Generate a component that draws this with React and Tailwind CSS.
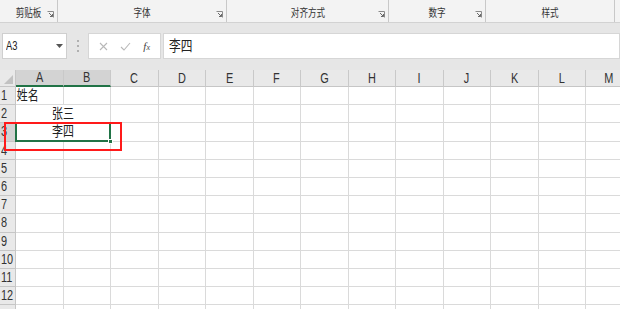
const groups = [
  { label: "剪贴板", w: 58, launcher: true },
  { label: "字体", w: 169, launcher: true },
  { label: "对齐方式", w: 162, launcher: true },
  { label: "数字", w: 97, launcher: true },
  { label: "样式", w: 129, launcher: false },
];

const cols = ["A", "B", "C", "D", "E", "F", "G", "H", "I", "J", "K", "L", "M"];
const rows = [1, 2, 3, 4, 5, 6, 7, 8, 9, 10, 11, 12, 13];

function Narrow({ children, className = "" }) {
  return <span className={"inline-block scale-x-[0.78] " + className}>{children}</span>;
}

function Launcher() {
  return (
    <svg width="7" height="7" viewBox="0 0 7 7" className="absolute right-[3px] top-[11px]">
      <path d="M0.5 0.5H6.5V6.5" fill="none" stroke="#8a8a8a" />
      <path d="M2 2L5.5 5.5M5.5 3V5.5H3" fill="none" stroke="#6a6a6a" />
    </svg>
  );
}

function Cell({ r, c }) {
  if (c === 0 && (r === 2 || r === 3)) {
    return (
      <div className="col-span-2 border-r border-b border-[#dadada] bg-white relative flex items-center justify-center text-[14px] text-[#222]">
        <Narrow>{r === 2 ? "张三" : "李四"}</Narrow>
        {r === 3 && (
          <div className="absolute -left-px -top-px -right-px -bottom-px border-2 border-[#217346]">
            <div className="absolute -right-[4px] -bottom-[4px] w-[5px] h-[5px] bg-[#217346] border border-white" />
          </div>
        )}
      </div>
    );
  }
  if (c === 1 && (r === 2 || r === 3)) return null;
  return (
    <div className="border-r border-b border-[#dadada] bg-white flex items-center text-[14px] text-[#222] overflow-hidden">
      {r === 1 && c === 0 && <Narrow className="origin-left pl-[1px]">姓名</Narrow>}
    </div>
  );
}

export default function App() {
  return (
    <div
      className="w-[620px] h-[309px] overflow-hidden bg-[#e6e6e6] flex flex-col"
      style={{ fontFamily: '"Liberation Sans", "Noto Sans CJK SC", sans-serif' }}
    >
      {/* ribbon group labels */}
      <div className="h-[23px] bg-[#f3f3f3] border-b border-[#d2d2d2] flex shrink-0">
        {groups.map((g) => (
          <div
            key={g.label}
            className="relative h-full border-r border-[#c8c8c8] flex items-end justify-center pb-[3px]"
            style={{ width: g.w }}
          >
            <Narrow className="text-[11px] text-[#333] leading-none">{g.label}</Narrow>
            {g.launcher && <Launcher />}
          </div>
        ))}
      </div>

      {/* formula bar */}
      <div className="h-[47px] flex items-start pt-[10px] shrink-0">
        <div className="ml-[2px] w-[65px] h-[26px] bg-white border border-[#cfcfcf] flex items-center justify-between px-[3px]">
          <Narrow className="text-[12px] text-[#222] origin-left">A3</Narrow>
          <svg width="7" height="4" viewBox="0 0 7 4"><path d="M0 0H7L3.5 4Z" fill="#555" /></svg>
        </div>
        <div className="w-[21px] h-[26px] flex flex-col items-center justify-center gap-[3px]">
          <span className="w-[2px] h-[2px] bg-[#b0b0b0]" />
          <span className="w-[2px] h-[2px] bg-[#b0b0b0]" />
          <span className="w-[2px] h-[2px] bg-[#b0b0b0]" />
        </div>
        <div className="w-[73px] h-[26px] bg-white border border-[#d6d6d6] flex items-center justify-around px-[4px]">
          <svg width="9" height="9" viewBox="0 0 9 9"><path d="M1 1L8 8M8 1L1 8" stroke="#b8b8b8" strokeWidth="1.1" /></svg>
          <svg width="11" height="9" viewBox="0 0 11 9"><path d="M1 5L4 8L10 1" fill="none" stroke="#b8b8b8" strokeWidth="1.1" /></svg>
          <span className="text-[11px] italic text-[#444]" style={{ fontFamily: '"Liberation Serif", serif' }}>
            f<span className="text-[8px]">x</span>
          </span>
        </div>
        <div className="ml-[2px] flex-1 h-[26px] bg-white border border-[#d6d6d6] flex items-center pl-[5px]">
          <Narrow className="text-[15px] text-[#222] origin-left">李四</Narrow>
        </div>
      </div>

      {/* sheet */}
      <div className="relative flex-1 overflow-hidden">
        <div className="grid grid-cols-[16px_repeat(13,47.5px)] grid-rows-[17px_repeat(13,18.2px)] w-[634px]">
          <div className="bg-[#e9e9e9] border-r border-b border-[#c6c6c6] relative">
            <svg width="9" height="9" viewBox="0 0 9 9" className="absolute right-[2px] bottom-[2px]">
              <path d="M9 0V9H0Z" fill="#c2c2c2" />
            </svg>
          </div>
          {cols.map((c, i) => (
            <div
              key={c}
              className={
                "flex items-center justify-center text-[14px] text-[#333] border-r border-[#c9c9c9] " +
                (i < 2 ? "bg-[#d3d3d3] border-b-2 border-b-[#217346]" : "bg-[#e9e9e9] border-b border-b-[#c6c6c6]")
              }
            >
              <Narrow>{c}</Narrow>
            </div>
          ))}
          {rows.map((r) => (
            <>
              <div
                key={"h" + r}
                className={
                  "border-r border-b border-[#c6c6c6] flex items-center text-[14px] text-[#333] pl-[1px] " +
                  (r === 3 ? "bg-[#d3d3d3]" : "bg-[#e9e9e9]")
                }
              >
                {r < 13 && <Narrow className="origin-left">{r}</Narrow>}
              </div>
              {cols.map((c, i) => (
                <Cell key={c + r} r={r} c={i} />
              ))}
            </>
          ))}
        </div>
        {/* red highlight box */}
        <div className="absolute left-[4px] top-[52px] w-[118px] h-[29px] border-2 border-[#ff1a1a]" />
      </div>
    </div>
  );
}
